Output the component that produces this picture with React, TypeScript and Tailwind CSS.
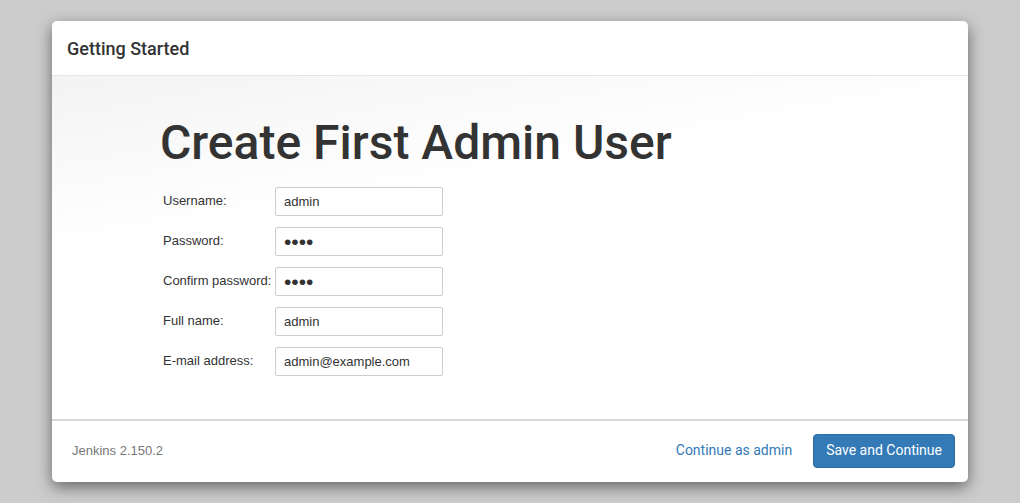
export default function App() {
  const fields = [
    { label: 'Username:', value: 'admin', type: 'text' },
    { label: 'Password:', value: 'abcd', type: 'password' },
    { label: 'Confirm password:', value: 'abcd', type: 'password' },
    { label: 'Full name:', value: 'admin', type: 'text' },
    { label: 'E-mail address:', value: 'admin@example.com', type: 'text' },
  ]

  return (
    <div className="w-[1020px] h-[503px] bg-[#cccccc] pt-[21px] pl-[52px] font-['Roboto',sans-serif]">
      <div className="w-[916px] h-[461px] bg-white rounded-[5px] shadow-[0_5px_15px_rgba(0,0,0,0.5)] flex flex-col overflow-hidden">
        <div className="h-[55px] px-[15px] pt-[1px] flex items-center border-b border-[#e5e5e5] shrink-0">
          <h4 className="text-[18px] font-medium text-[#333]">Getting Started</h4>
        </div>
        <div className="flex-1 bg-[linear-gradient(170deg,#f3f3f3_0%,#ffffff_35%)] pl-[108px] pt-[43px]">
          <h1 className="text-[48px] font-medium text-[#333] leading-none">Create First Admin User</h1>
          <div className="mt-[20px] flex flex-col gap-[11px] font-['Liberation_Sans',Arial,sans-serif] text-[13px] text-[#333]">
            {fields.map(f => (
              <div key={f.label} className="flex items-start pl-[3px]">
                <label className="w-[112px] pt-[4px]">{f.label}</label>
                <input
                  readOnly
                  type={f.type}
                  value={f.value}
                  className={`w-[168px] h-[29px] border border-[#cccccc] rounded-[2px] px-[8px] text-[#333] bg-white outline-none ${f.type === 'password' ? 'text-[21px]' : 'text-[13px]'}`}
                />
              </div>
            ))}
          </div>
        </div>
        <div className="h-[63px] border-t-2 border-[#d9d9d9] flex items-center justify-between pl-[20px] pr-[13px] pb-[2px] shrink-0">
          <span className="text-[13px] text-[#777] font-['Liberation_Sans',Arial,sans-serif]">Jenkins 2.150.2</span>
          <div className="flex items-center gap-[21px]">
            <a className="text-[14px] text-[#337ab7] cursor-pointer">Continue as admin</a>
            <button className="h-[34px] px-[12px] rounded-[4px] bg-[#337ab7] border border-[#2e6da4] text-white text-[14px]">Save and Continue</button>
          </div>
        </div>
      </div>
    </div>
  )
}
